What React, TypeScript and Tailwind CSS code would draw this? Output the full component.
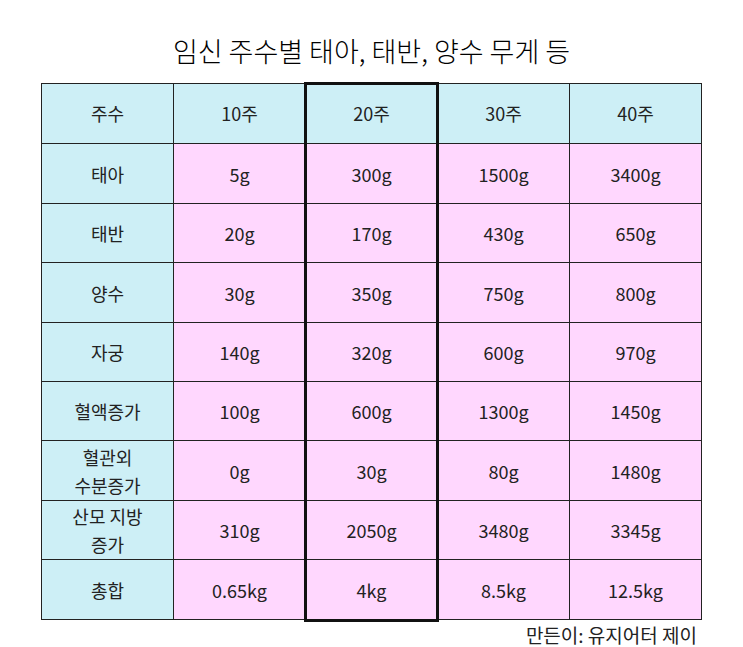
import React from "react";

const FONT = { fontFamily: '"Noto Sans CJK KR", "Noto Sans", sans-serif' };

const header = ["주수", "10주", "20주", "30주", "40주"];
const rows: string[][] = [
  ["태아", "5g", "300g", "1500g", "3400g"],
  ["태반", "20g", "170g", "430g", "650g"],
  ["양수", "30g", "350g", "750g", "800g"],
  ["자궁", "140g", "320g", "600g", "970g"],
  ["혈액증가", "100g", "600g", "1300g", "1450g"],
  ["혈관외\n수분증가", "0g", "30g", "80g", "1480g"],
  ["산모 지방\n증가", "310g", "2050g", "3480g", "3345g"],
  ["총합", "0.65kg", "4kg", "8.5kg", "12.5kg"],
];
const heights = ["h-[60px]", "h-[60px]", "h-[59px]", "h-[60px]", "h-[59px]", "h-[59px]", "h-[60px]", "h-[59px]", "h-[60px]"];

export default function App() {
  return (
    <div className="w-[743px] h-[647px] bg-white text-[#222]" style={FONT}>
      <div className="pt-[32px] h-[83px] text-center text-[27px] leading-[38px] font-light text-black">
        임신 주수별 태아, 태반, 양수 무게 등
      </div>
      <div className="relative ml-[41px] w-[661px]">
        <div className="grid grid-cols-[132px_132px_132px_132px_132px] border-l border-t border-[#222]">
          {header.map((h, i) => (
            <div
              key={"h" + i}
              className={`${heights[0]} flex items-center justify-center border-r border-b border-[#222] bg-[#cdeff6] text-[18px]`}
            >
              {h}
            </div>
          ))}
          {rows.map((r, ri) =>
            r.map((c, ci) => (
              <div
                key={ri + "-" + ci}
                className={`${heights[ri + 1]} flex items-center justify-center text-center border-r border-b border-[#222] text-[18px] leading-[28px] whitespace-pre-line ${
                  ci === 0 ? "bg-[#cdeff6]" : "bg-[#ffd7fe]"
                }`}
              >
                {c}
              </div>
            ))
          )}
        </div>
        <div className="absolute left-[263px] top-[-1px] w-[135px] h-[540px] border-[3px] border-[#111] pointer-events-none" />
      </div>
      <div className="w-[697px] text-right text-[19px] leading-[26px] mt-[2px]">만든이: 유지어터 제이</div>
    </div>
  );
}
